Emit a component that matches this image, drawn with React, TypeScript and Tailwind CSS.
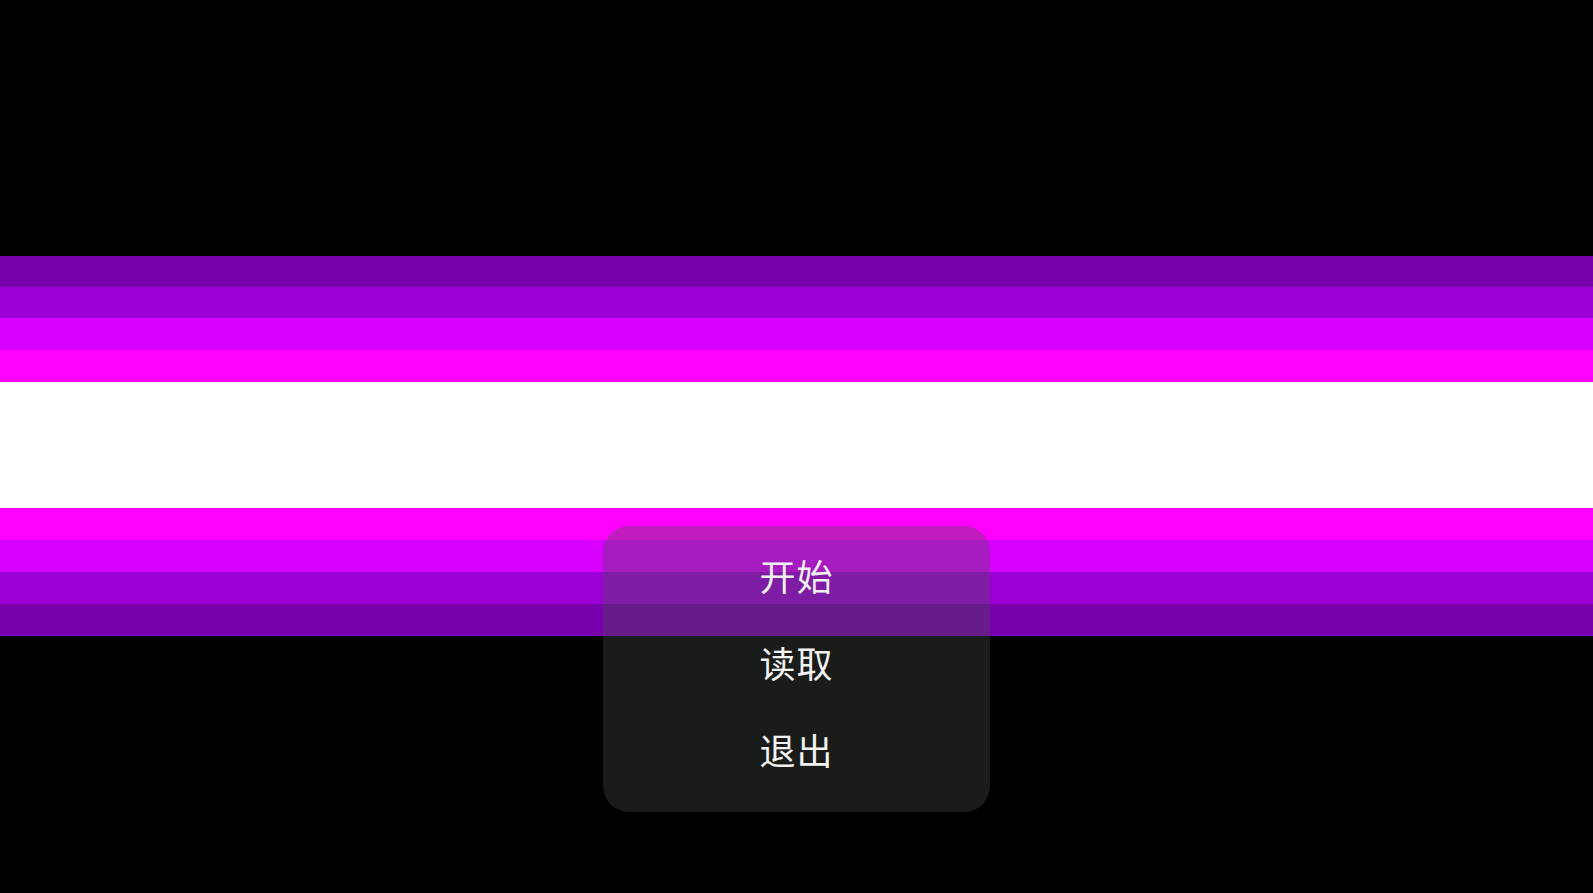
const stripesTop = [
  { h: 'h-[31px]', c: 'bg-[#7800ad]' },
  { h: 'h-[31px]', c: 'bg-[#9b00d6]' },
  { h: 'h-[32px]', c: 'bg-[#d800ff]' },
  { h: 'h-[32px]', c: 'bg-[#ff00ff]' },
];

const stripesBottom = [
  { h: 'h-[32px]', c: 'bg-[#ff00ff]' },
  { h: 'h-[32px]', c: 'bg-[#d800ff]' },
  { h: 'h-[32px]', c: 'bg-[#9b00d6]' },
  { h: 'h-[32px]', c: 'bg-[#7800ad]' },
];

const items = ['开始', '读取', '退出'];

export default function App() {
  return (
    <div className="relative w-full h-[893px] bg-black overflow-hidden" style={{ fontFamily: '"Noto Sans CJK SC", "Noto Sans", sans-serif' }}>
      <div className="flex flex-col pt-[256px]">
        {stripesTop.map((s, i) => (
          <div key={'t' + i} className={`${s.h} ${s.c}`} />
        ))}
        <div className="h-[126px] bg-white" />
        {stripesBottom.map((s, i) => (
          <div key={'b' + i} className={`${s.h} ${s.c}`} />
        ))}
      </div>

      {/* title menu, sits over the banner */}
      <div className="absolute left-[603px] top-[526px] w-[387px] h-[286px] rounded-[26px] bg-[rgba(74,80,74,0.35)] pt-[5px] pb-[20px] flex flex-col">
        {items.map((label) => (
          <button
            key={label}
            type="button"
            className="h-[87px] flex items-center justify-center text-[36px] text-[#f2f2f2] tracking-[1px]"
          >
            {label}
          </button>
        ))}
      </div>
    </div>
  );
}
